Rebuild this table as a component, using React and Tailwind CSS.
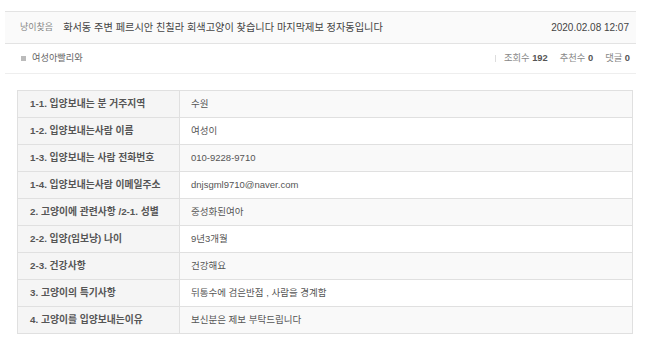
import React from "react";

const rows = [
  ["1-1. 입양보내는 분 거주지역", "수원"],
  ["1-2. 입양보내는사람 이름", "여성이"],
  ["1-3. 입양보내는 사람 전화번호", "010-9228-9710"],
  ["1-4. 입양보내는사람 이메일주소", "dnjsgml9710@naver.com"],
  ["2. 고양이에 관련사항 /2-1. 성별", "중성화된여아"],
  ["2-2. 입양(임보냥) 나이", "9년3개월"],
  ["2-3. 건강사항", "건강해요"],
  ["3. 고양이의 특기사항", "뒤통수에 검은반점 , 사람을 경계함"],
  ["4. 고양이를 입양보내는이유", "보신분은 제보 부탁드립니다"],
];

export default function App() {
  return (
    <div
      className="w-[649px] h-[344px] bg-white overflow-hidden text-[#555]"
      style={{ fontFamily: '"Liberation Sans", "Noto Sans CJK KR", sans-serif' }}
    >
      <div className="pt-[11px] px-[5px] w-[641px]">
        <div className="border-t border-[#e3e3e3] bg-[#fafafa] h-[33px] flex items-center justify-between pl-[15px] pr-[7px] border-b">
          <div className="flex items-center">
            <span className="text-[#888] text-[9px] mr-[10px]">냥이찾음</span>
            <span className="text-[#444] text-[10.2px]">화서동 주변 페르시안 친칠라 회색고양이 찾습니다 마지막제보 정자동입니다</span>
          </div>
          <span className="text-[10px] text-[#444]">2020.02.08 12:07</span>
        </div>
        <div className="h-[30px] flex items-center justify-between border-b border-[#eeeeee] pl-[16px] pr-[6px]">
          <div className="flex items-center text-[9.2px] text-[#666]">
            <span className="inline-block w-[5px] h-[5px] bg-[#bbb] mr-[6px]"></span>
            여성아빨리와
          </div>
          <div className="flex items-center text-[9.3px] text-[#888]">
            <span className="inline-block w-px h-[7px] bg-[#ddd] mr-[8px]"></span>
            <span>조회수 <b className="text-[#555]">192</b></span>
            <span className="ml-[12px]">추천수 <b className="text-[#555]">0</b></span>
            <span className="ml-[12px]">댓글 <b className="text-[#555]">0</b></span>
          </div>
        </div>
      </div>
      <div className="pl-[17px] pt-[16px]">
        <table className="w-[616px] border-collapse border border-[#e0e0e0]">
          <tbody>
            {rows.map(([k, v], i) => (
              <tr key={i} className={i % 2 === 0 ? "bg-[#f9f9f9]" : "bg-white"}>
                <td className="w-[162px] h-[27px] border-b border-r border-[#e0e0e0] bg-[#f5f5f5] pl-[12px] font-bold text-[#555] text-[9.8px] align-middle">
                  {k}
                </td>
                <td className="border-b border-[#e0e0e0] pl-[11px] text-[#555] text-[9.5px] align-middle">{v}</td>
              </tr>
            ))}
          </tbody>
        </table>
      </div>
    </div>
  );
}
